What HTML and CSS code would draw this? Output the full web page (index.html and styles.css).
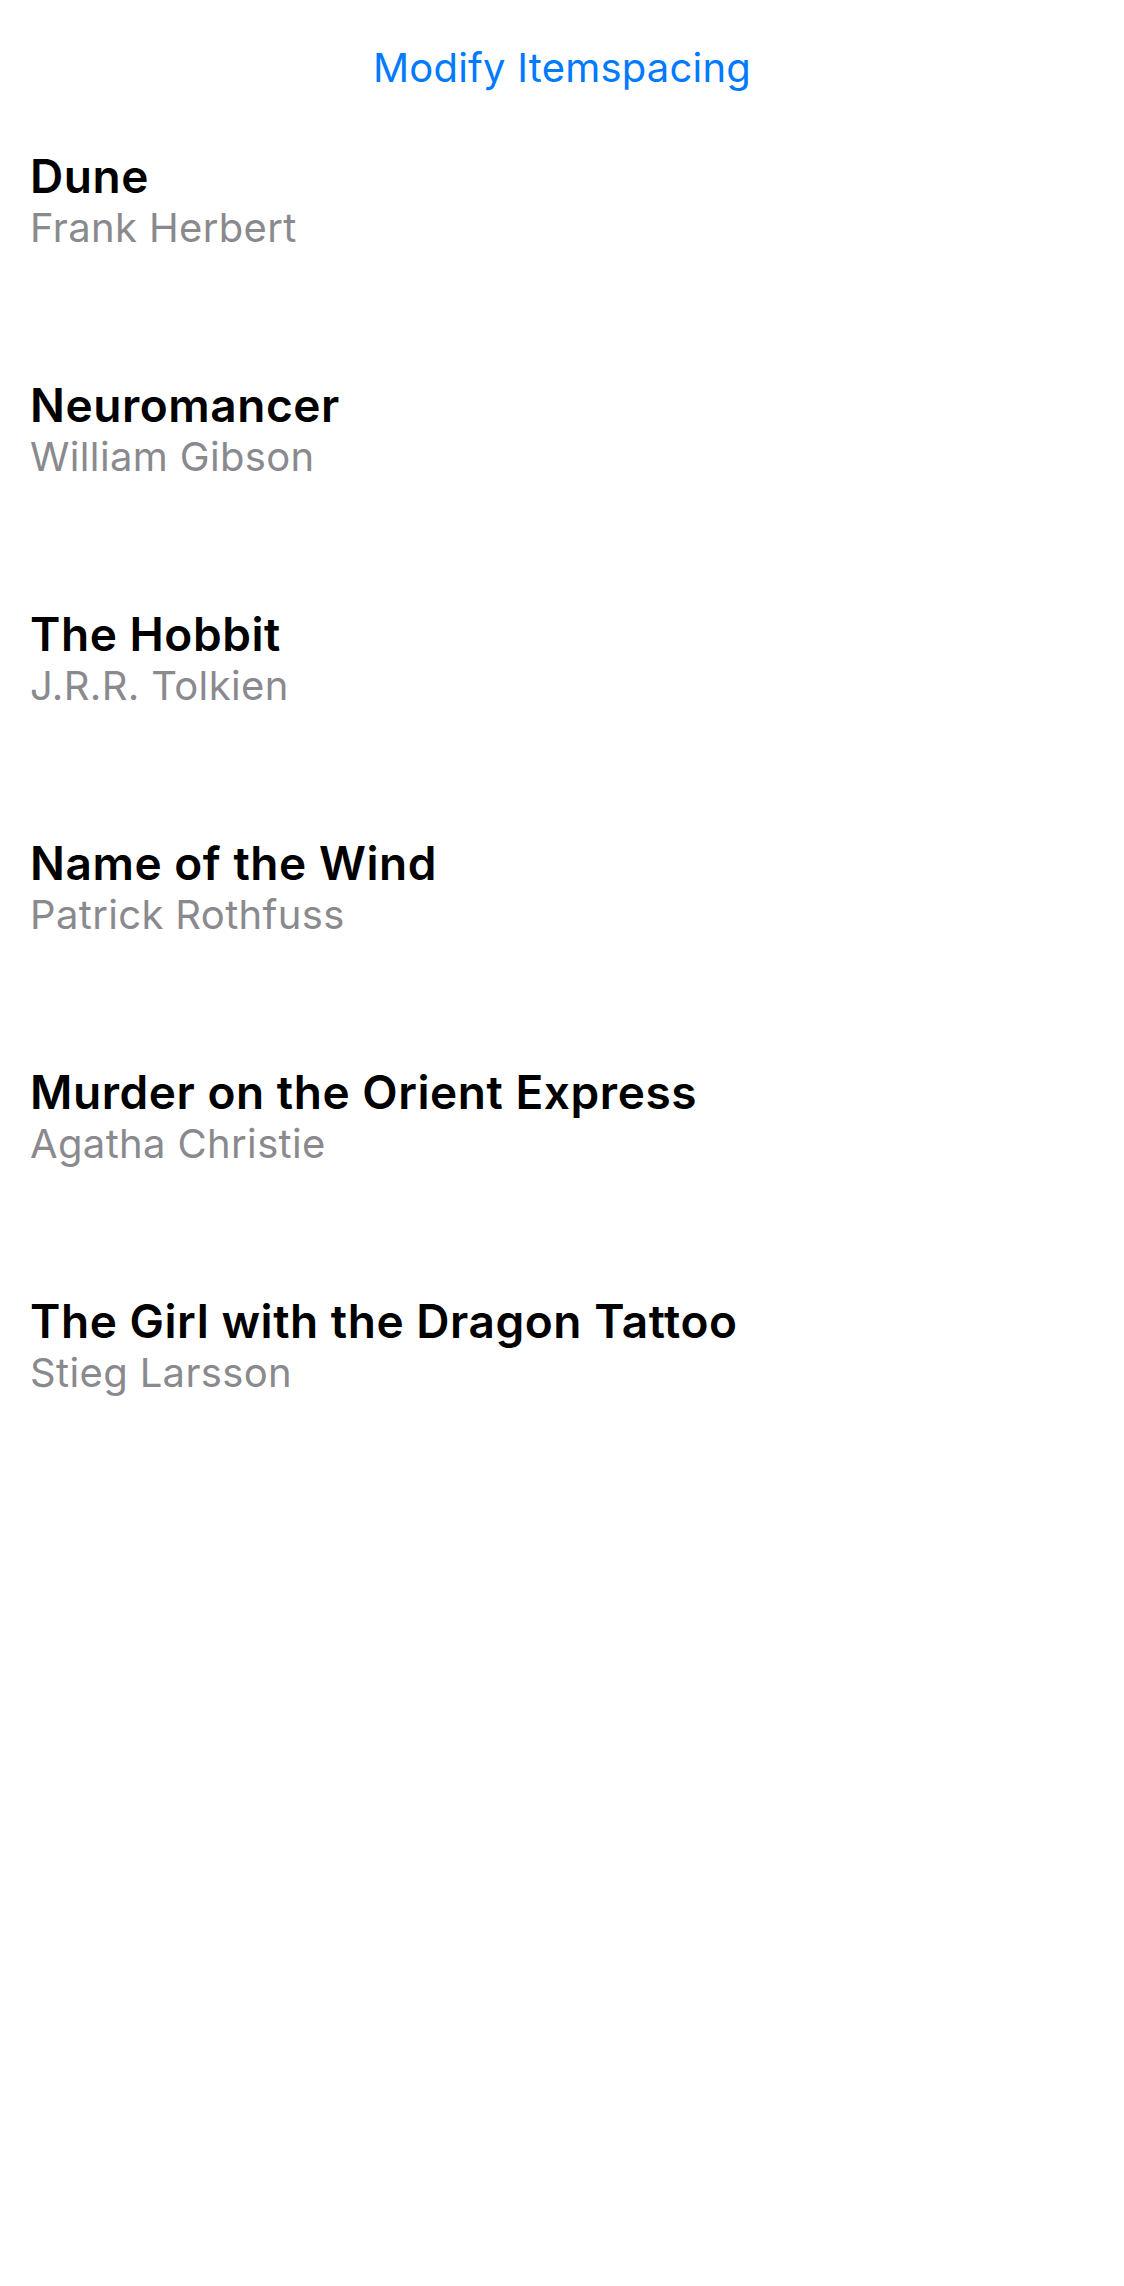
FILE: index.html
```html
<!DOCTYPE html>
<html lang="en">
<head>
<meta charset="utf-8">
<title>Modify Itemspacing</title>
<link rel="stylesheet" href="styles.css">
</head>
<body>
<main class="screen">
  <div class="toolbar">
    <button class="link-button" type="button">Modify Itemspacing</button>
  </div>
  <ul class="book-list">
    <li class="book">
      <span class="book-title">Dune</span>
      <span class="book-author">Frank Herbert</span>
    </li>
    <li class="book">
      <span class="book-title">Neuromancer</span>
      <span class="book-author">William Gibson</span>
    </li>
    <li class="book">
      <span class="book-title">The Hobbit</span>
      <span class="book-author">J.R.R. Tolkien</span>
    </li>
    <li class="book">
      <span class="book-title">Name of the Wind</span>
      <span class="book-author">Patrick Rothfuss</span>
    </li>
    <li class="book">
      <span class="book-title">Murder on the Orient Express</span>
      <span class="book-author">Agatha Christie</span>
    </li>
    <li class="book">
      <span class="book-title">The Girl with the Dragon Tattoo</span>
      <span class="book-author">Stieg Larsson</span>
    </li>
  </ul>
</main>
</body>
</html>
```
FILE: styles.css
```css
* { box-sizing: border-box; }

html, body {
  margin: 0;
  padding: 0;
  background: #ffffff;
}

body {
  font-family: Inter, "Noto Sans", "Liberation Sans", sans-serif;
  -webkit-font-smoothing: antialiased;
}

.screen {
  width: 1124px;
  min-height: 2286px;
  padding-top: 44px;
  display: flex;
  flex-direction: column;
}

.toolbar {
  display: flex;
  justify-content: center;
}

.link-button {
  font-family: inherit;
  font-size: 40px;
  line-height: 48px;
  font-weight: 400;
  letter-spacing: 0.2px;
  color: #007aff;
  background: none;
  border: 0;
  padding: 0;
  margin: 0;
  cursor: pointer;
}

.book-list {
  list-style: none;
  margin: 56px 0 0 0;
  padding: 0 0 0 30px;
  display: flex;
  flex-direction: column;
  gap: 125px;
}

.book {
  display: flex;
  flex-direction: column;
}

.book-title {
  font-size: 46px;
  line-height: 56px;
  font-weight: 600;
  letter-spacing: 0.55px;
  color: #000000;
}

.book-author {
  font-size: 40px;
  line-height: 48px;
  font-weight: 400;
  letter-spacing: 0.35px;
  color: #8a8a8e;
}
```
